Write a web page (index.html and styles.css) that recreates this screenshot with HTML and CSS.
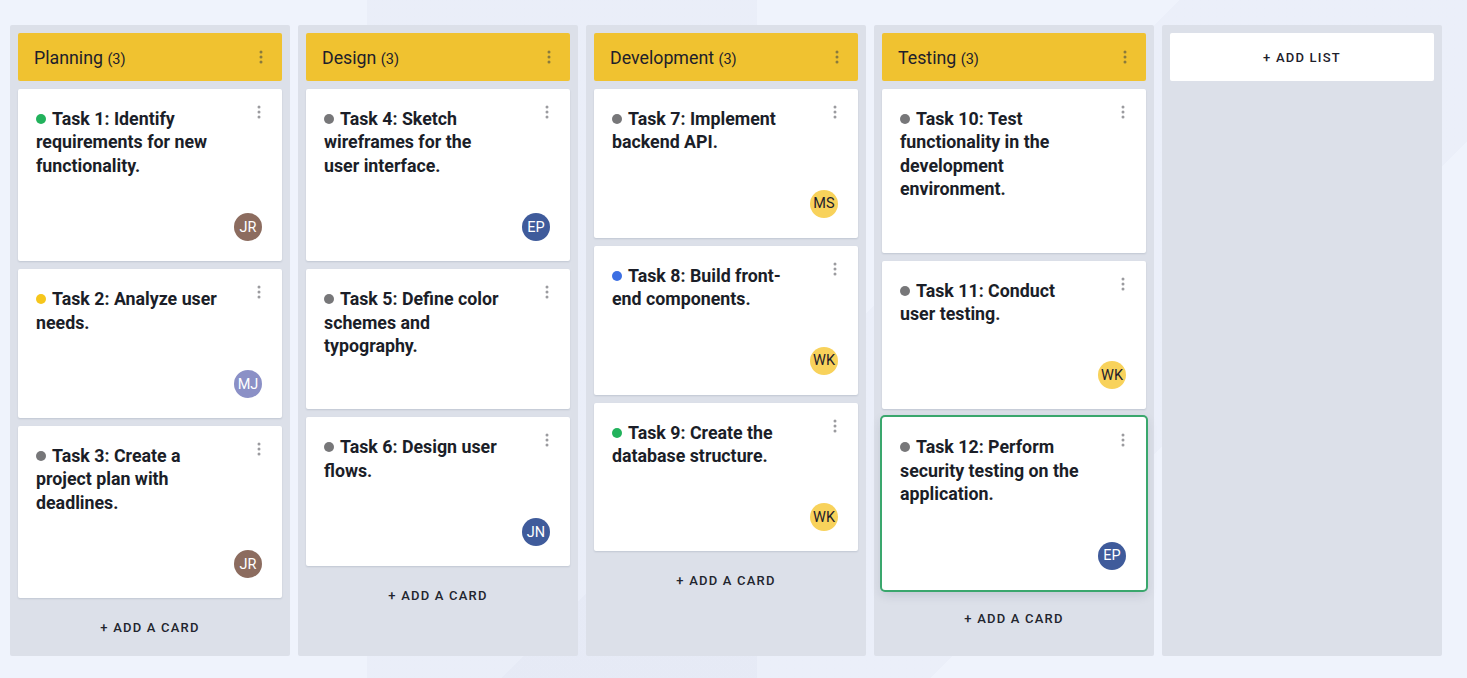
FILE: index.html
```html
<!DOCTYPE html>
<html lang="en">
<head>
<meta charset="utf-8">
<title>Board</title>
<link rel="stylesheet" href="styles.css">
</head>
<body>
<main class="board">

  <section class="list">
    <header class="list-header">
      <h2 class="list-title">Planning <span class="count">(3)</span></h2>
      <svg class="kebab" width="4" height="14" viewBox="0 0 4 14"><circle cx="2" cy="2" r="1.5"/><circle cx="2" cy="7" r="1.5"/><circle cx="2" cy="12" r="1.5"/></svg>
    </header>
    <article class="card">
      <div class="card-top">
        <p class="card-title"><span class="dot green"></span>Task 1: Identify requirements for new functionality.</p>
        <svg class="kebab card-kebab" width="4" height="14" viewBox="0 0 4 14"><circle cx="2" cy="2" r="1.5"/><circle cx="2" cy="7" r="1.5"/><circle cx="2" cy="12" r="1.5"/></svg>
      </div>
      <div class="card-foot"><span class="avatar brown">JR</span></div>
    </article>
    <article class="card">
      <div class="card-top">
        <p class="card-title"><span class="dot yellow"></span>Task 2: Analyze user needs.</p>
        <svg class="kebab card-kebab" width="4" height="14" viewBox="0 0 4 14"><circle cx="2" cy="2" r="1.5"/><circle cx="2" cy="7" r="1.5"/><circle cx="2" cy="12" r="1.5"/></svg>
      </div>
      <div class="card-foot"><span class="avatar lavender">MJ</span></div>
    </article>
    <article class="card">
      <div class="card-top">
        <p class="card-title"><span class="dot grey"></span>Task 3: Create a project plan with deadlines.</p>
        <svg class="kebab card-kebab" width="4" height="14" viewBox="0 0 4 14"><circle cx="2" cy="2" r="1.5"/><circle cx="2" cy="7" r="1.5"/><circle cx="2" cy="12" r="1.5"/></svg>
      </div>
      <div class="card-foot"><span class="avatar brown">JR</span></div>
    </article>
    <button class="add-card">+ ADD A CARD</button>
  </section>

  <section class="list">
    <header class="list-header">
      <h2 class="list-title">Design <span class="count">(3)</span></h2>
      <svg class="kebab" width="4" height="14" viewBox="0 0 4 14"><circle cx="2" cy="2" r="1.5"/><circle cx="2" cy="7" r="1.5"/><circle cx="2" cy="12" r="1.5"/></svg>
    </header>
    <article class="card">
      <div class="card-top">
        <p class="card-title"><span class="dot grey"></span>Task 4: Sketch wireframes for the user interface.</p>
        <svg class="kebab card-kebab" width="4" height="14" viewBox="0 0 4 14"><circle cx="2" cy="2" r="1.5"/><circle cx="2" cy="7" r="1.5"/><circle cx="2" cy="12" r="1.5"/></svg>
      </div>
      <div class="card-foot"><span class="avatar navy">EP</span></div>
    </article>
    <article class="card">
      <div class="card-top">
        <p class="card-title"><span class="dot grey"></span>Task 5: Define color schemes and typography.</p>
        <svg class="kebab card-kebab" width="4" height="14" viewBox="0 0 4 14"><circle cx="2" cy="2" r="1.5"/><circle cx="2" cy="7" r="1.5"/><circle cx="2" cy="12" r="1.5"/></svg>
      </div>
      <div class="card-foot empty"></div>
    </article>
    <article class="card">
      <div class="card-top">
        <p class="card-title"><span class="dot grey"></span>Task 6: Design user flows.</p>
        <svg class="kebab card-kebab" width="4" height="14" viewBox="0 0 4 14"><circle cx="2" cy="2" r="1.5"/><circle cx="2" cy="7" r="1.5"/><circle cx="2" cy="12" r="1.5"/></svg>
      </div>
      <div class="card-foot"><span class="avatar navy">JN</span></div>
    </article>
    <button class="add-card">+ ADD A CARD</button>
  </section>

  <section class="list">
    <header class="list-header">
      <h2 class="list-title">Development <span class="count">(3)</span></h2>
      <svg class="kebab" width="4" height="14" viewBox="0 0 4 14"><circle cx="2" cy="2" r="1.5"/><circle cx="2" cy="7" r="1.5"/><circle cx="2" cy="12" r="1.5"/></svg>
    </header>
    <article class="card">
      <div class="card-top">
        <p class="card-title"><span class="dot grey"></span>Task 7: Implement backend API.</p>
        <svg class="kebab card-kebab" width="4" height="14" viewBox="0 0 4 14"><circle cx="2" cy="2" r="1.5"/><circle cx="2" cy="7" r="1.5"/><circle cx="2" cy="12" r="1.5"/></svg>
      </div>
      <div class="card-foot"><span class="avatar gold">MS</span></div>
    </article>
    <article class="card">
      <div class="card-top">
        <p class="card-title"><span class="dot blue"></span>Task 8: Build front-end components.</p>
        <svg class="kebab card-kebab" width="4" height="14" viewBox="0 0 4 14"><circle cx="2" cy="2" r="1.5"/><circle cx="2" cy="7" r="1.5"/><circle cx="2" cy="12" r="1.5"/></svg>
      </div>
      <div class="card-foot"><span class="avatar gold">WK</span></div>
    </article>
    <article class="card">
      <div class="card-top">
        <p class="card-title"><span class="dot green"></span>Task 9: Create the database structure.</p>
        <svg class="kebab card-kebab" width="4" height="14" viewBox="0 0 4 14"><circle cx="2" cy="2" r="1.5"/><circle cx="2" cy="7" r="1.5"/><circle cx="2" cy="12" r="1.5"/></svg>
      </div>
      <div class="card-foot"><span class="avatar gold">WK</span></div>
    </article>
    <button class="add-card">+ ADD A CARD</button>
  </section>

  <section class="list">
    <header class="list-header">
      <h2 class="list-title">Testing <span class="count">(3)</span></h2>
      <svg class="kebab" width="4" height="14" viewBox="0 0 4 14"><circle cx="2" cy="2" r="1.5"/><circle cx="2" cy="7" r="1.5"/><circle cx="2" cy="12" r="1.5"/></svg>
    </header>
    <article class="card">
      <div class="card-top">
        <p class="card-title"><span class="dot grey"></span>Task 10: Test functionality in the development environment.</p>
        <svg class="kebab card-kebab" width="4" height="14" viewBox="0 0 4 14"><circle cx="2" cy="2" r="1.5"/><circle cx="2" cy="7" r="1.5"/><circle cx="2" cy="12" r="1.5"/></svg>
      </div>
      <div class="card-foot empty"></div>
    </article>
    <article class="card">
      <div class="card-top">
        <p class="card-title"><span class="dot grey"></span>Task 11: Conduct user testing.</p>
        <svg class="kebab card-kebab" width="4" height="14" viewBox="0 0 4 14"><circle cx="2" cy="2" r="1.5"/><circle cx="2" cy="7" r="1.5"/><circle cx="2" cy="12" r="1.5"/></svg>
      </div>
      <div class="card-foot"><span class="avatar gold">WK</span></div>
    </article>
    <article class="card selected">
      <div class="card-top">
        <p class="card-title"><span class="dot grey"></span>Task 12: Perform security testing on the application.</p>
        <svg class="kebab card-kebab" width="4" height="14" viewBox="0 0 4 14"><circle cx="2" cy="2" r="1.5"/><circle cx="2" cy="7" r="1.5"/><circle cx="2" cy="12" r="1.5"/></svg>
      </div>
      <div class="card-foot"><span class="avatar navy">EP</span></div>
    </article>
    <button class="add-card">+ ADD A CARD</button>
  </section>

  <section class="list">
    <button class="add-list">+ ADD LIST</button>
  </section>

</main>
</body>
</html>
```

FILE: styles.css
```css
* { box-sizing: border-box; }

html, body {
  margin: 0;
  height: 100%;
}

body {
  font-family: Roboto, "Liberation Sans", sans-serif;
  color: #1d202b;
  background-color: #eff3fc;
  background-image:
    linear-gradient(to right, transparent 367px, rgba(110, 115, 160, 0.04) 367px, rgba(110, 115, 160, 0.04) 757px, transparent 757px),
    linear-gradient(135deg, transparent 55%, rgba(110, 115, 160, 0.03) 55%, rgba(110, 115, 160, 0.03) 75%, transparent 75%);
}

.board {
  display: flex;
  gap: 8px;
  height: 100%;
  padding: 25px 10px 22px;
  align-items: stretch;
}

.list {
  width: 280px;
  flex: 0 0 280px;
  background: #dce0e9;
  border-radius: 2px;
  padding: 8px;
  display: flex;
  flex-direction: column;
  gap: 8px;
}

.list > * {
  flex-shrink: 0;
}

.list-header {
  height: 48px;
  background: #f0c230;
  border-radius: 2px;
  display: flex;
  align-items: center;
  justify-content: space-between;
  padding: 0 19px 0 16px;
}

.list-title {
  margin: 0;
  font-size: 17.8px;
  font-weight: 400;
  color: #1d202b;
}

.count {
  font-size: 14.5px;
}

.kebab {
  fill: #8a7a3c;
  flex: 0 0 auto;
}

.card {
  background: #fff;
  border-radius: 2px;
  box-shadow: 0 1px 2px rgba(30, 40, 70, 0.14);
  padding: 18px 20px 20px 18px;
}

.card.selected {
  border-radius: 3px;
  box-shadow: 0 0 0 2px #3aa76d, 0 4px 12px rgba(30, 40, 70, 0.16);
}

.card-top {
  display: flex;
  justify-content: space-between;
  align-items: flex-start;
}

.card-title {
  margin: 0;
  width: 183px;
  font-size: 17.8px;
  font-weight: 700;
  line-height: 23.4px;
  color: #1b1e28;
}

.dot {
  display: inline-block;
  width: 10px;
  height: 10px;
  border-radius: 50%;
  margin-right: 6px;
  vertical-align: 1px;
}

.dot.green { background: #22b25c; }
.dot.yellow { background: #f6c61c; }
.dot.grey { background: #777779; }
.dot.blue { background: #3c6fe3; }

.card-kebab {
  fill: #9b9b9f;
  margin-top: -2px;
  margin-right: 1px;
}

.card-foot {
  margin-top: 36px;
  height: 28px;
  display: flex;
  justify-content: flex-end;
}

.card-foot.empty {
  margin-top: 32px;
  height: 0;
}

.avatar {
  width: 28px;
  height: 28px;
  border-radius: 50%;
  display: flex;
  align-items: center;
  justify-content: center;
  font-size: 14.5px;
  color: #fff;
}

.avatar.brown { background: #8c6c5f; }
.avatar.lavender { background: #8b90c6; }
.avatar.navy { background: #3f5b9b; }
.avatar.gold { background: #f8d25b; color: #1d202b; }

.add-card {
  height: 42px;
  border: 0;
  background: transparent;
  font-family: inherit;
  font-size: 13px;
  font-weight: 500;
  letter-spacing: 1.2px;
  color: #22252e;
  cursor: pointer;
}

.add-list {
  height: 48px;
  flex-shrink: 0;
  border: 0;
  border-radius: 2px;
  background: #fff;
  font-family: inherit;
  font-size: 13px;
  font-weight: 500;
  letter-spacing: 1.2px;
  color: #1d202b;
  cursor: pointer;
}
```
